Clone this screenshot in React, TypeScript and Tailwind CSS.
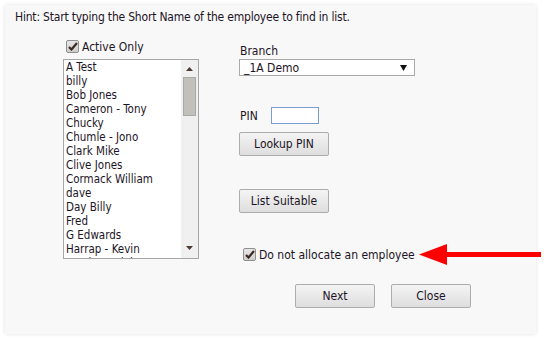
import React from 'react';

const names = [
    'A Test',
    'billy',
    'Bob Jones',
    'Cameron - Tony',
    'Chucky',
    'Chumle - Jono',
    'Clark Mike',
    'Clive Jones',
    'Cormack William',
    'dave',
    'Day Billy',
    'Fred',
    'G Edwards',
    'Harrap - Kevin',
    'Harris Daniel',
];

const Check = () => (
    <span className="flex h-[13px] w-[13px] shrink-0 items-center justify-center rounded-[2px] border border-[#8e8f8f] bg-gradient-to-b from-[#e6e6e6] to-[#cfcfcf]">
        <svg width="10" height="9" viewBox="0 0 10 9">
            <path d="M1 5 L3.5 7.5 L9 1" fill="none" stroke="#3b2a24" strokeWidth="2.2" />
        </svg>
    </span>
);

const Button = ({ label, w }: { label: string; w: string }) => (
    <button className={`${w} h-[24px] rounded-[2px] border border-[#acacac] bg-gradient-to-b from-[#f4f4f4] to-[#dedede] text-[12px] text-[#1c1426]`}>
        {label}
    </button>
);

const App = () => {
    return (
        <div className="h-[340px] w-[544px] bg-white pt-[5px] pl-[5px] font-['DejaVu_Sans_Condensed','DejaVu_Sans',sans-serif] text-[#1c1426]">
            <div className="h-[329px] w-[531px] bg-[#f8f8f8] pt-[4px] shadow-[0_0_4px_rgba(0,0,0,0.12)]">
                {/* Hint */}
                <p className="whitespace-nowrap pl-[10px] text-[12px] leading-[16px] tracking-[-0.2px]">
                    Hint: Start typing the Short Name of the employee to find in list.
                </p>

                <div className="mt-[12px] flex items-start">
                    {/* Employee list */}
                    <div className="ml-[58px] w-[136px] shrink-0">
                        <label className="mt-[1px] flex h-[16px] items-center gap-[3px] pl-[3px] text-[12px]">
                            <Check />
                            <span className="pt-[2px]">Active Only</span>
                        </label>
                        <div className="mt-[5px] flex h-[200px] border border-[#a6a6a6] bg-white">
                            <ul className="flex-1 overflow-hidden pl-[2px] text-[11.5px] leading-[14px]">
                                {names.map((n) => (
                                    <li key={n} className="whitespace-nowrap">{n}</li>
                                ))}
                            </ul>
                            <div className="flex w-[17px] flex-col items-center bg-[#f0f0f0]">
                                <svg className="mt-[7px]" width="7" height="4" viewBox="0 0 7 4">
                                    <polygon points="3.5,0 7,4 0,4" fill="#4d3a32" />
                                </svg>
                                <div className="mt-[6px] h-[39px] w-[13px] border border-[#a9a8a4] bg-[#c2c0bb]" />
                                <svg className="mt-auto mb-[8px]" width="7" height="4" viewBox="0 0 7 4">
                                    <polygon points="0,0 7,0 3.5,4" fill="#4d3a32" />
                                </svg>
                            </div>
                        </div>
                    </div>

                    {/* Right side */}
                    <div className="ml-[40px] flex shrink-0 flex-col">
                        <span className="ml-[1px] mt-[6px] text-[12px] leading-[16px]">Branch</span>
                        <div className="flex h-[17px] w-[176px] items-center justify-between border border-[#a9a9a9] bg-white pl-[4px] pr-[7px] text-[12px]">
                            <span>_1A Demo</span>
                            <svg width="7" height="6" viewBox="0 0 7 6">
                                <polygon points="0,0 7,0 3.5,6" fill="#111" />
                            </svg>
                        </div>

                        <div className="mt-[31px] flex items-center">
                            <span className="ml-[1px] w-[31px] text-[12px] leading-[14px]">PIN</span>
                            <input className="h-[17px] w-[48px] border border-[#7a9ed4] bg-white outline-none" />
                        </div>

                        <div className="mt-[7px]">
                            <Button label="Lookup PIN" w="w-[90px]" />
                        </div>
                        <div className="mt-[32px]">
                            <Button label="List Suitable" w="w-[90px]" />
                        </div>

                        <div className="mt-[33px] flex h-[16px] items-center whitespace-nowrap">
                            <label className="ml-[4px] flex items-center gap-[3px] text-[12px]">
                                <Check />
                                <span className="pt-[1px]">Do not allocate an employee</span>
                            </label>
                            <svg className="ml-[4px] shrink-0" width="122" height="21" viewBox="0 0 122 21">
                                <polygon points="0,10.5 28,0 28,8 122,8 122,13 28,13 28,21" fill="#ff0000" />
                            </svg>
                        </div>
                    </div>
                </div>

                {/* Footer buttons */}
                <div className="mt-[22px] flex gap-[16px] pl-[290px]">
                    <Button label="Next" w="w-[80px]" />
                    <Button label="Close" w="w-[80px]" />
                </div>
            </div>
        </div>
    );
};

export default App;
